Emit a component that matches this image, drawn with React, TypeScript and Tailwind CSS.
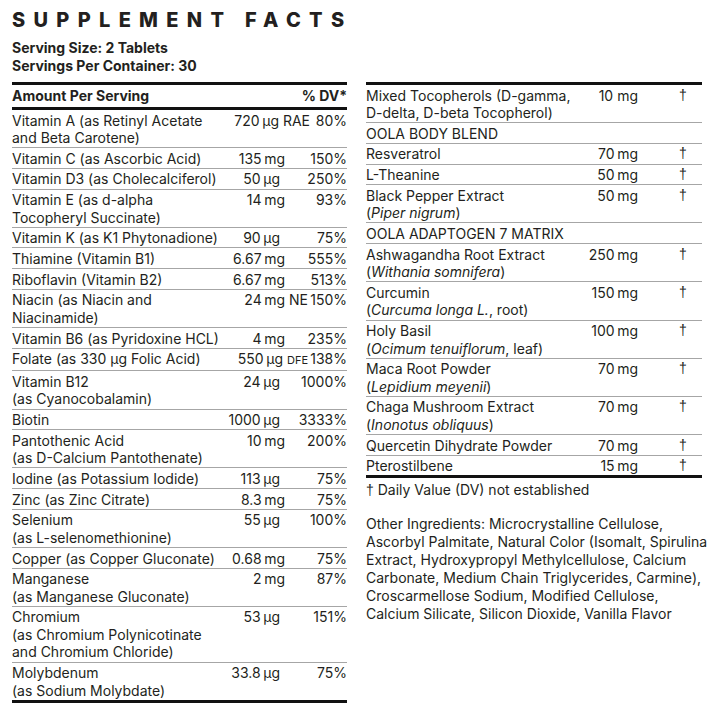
import React from "react";

type LRowT = {
  n: React.ReactNode[];
  a: React.ReactNode;
  d: string;
  ac?: string;
  dc?: string;
};

const T = "\u2009";

const left: LRowT[] = [
  { n: ["Vitamin A (as Retinyl Acetate", "and Beta Carotene)"], a: <>720{T}µg RAE</>, d: "80%", dc: "w-[37px] text-right" },
  { n: ["Vitamin C (as Ascorbic Acid)"], a: <>135{T}mg</>, d: "150%" },
  { n: ["Vitamin D3 (as Cholecalciferol)"], a: <>50{T}µg</>, d: "250%", ac: "mr-[5px]" },
  { n: ["Vitamin E (as d-alpha", "Tocopheryl Succinate)"], a: <>14{T}mg</>, d: "93%" },
  { n: ["Vitamin K (as K1 Phytonadione)"], a: <>90{T}µg</>, d: "75%", ac: "mr-[5px]" },
  { n: ["Thiamine (Vitamin B1)"], a: <>6.67{T}mg</>, d: "555%" },
  { n: ["Riboflavin (Vitamin B2)"], a: <>6.67{T}mg</>, d: "513%" },
  { n: ["Niacin (as Niacin and", "Niacinamide)"], a: <>24{T}mg NE</>, d: "150%", dc: "w-[39px] text-right" },
  { n: ["Vitamin B6 (as Pyridoxine HCL)"], a: <>4{T}mg</>, d: "235%" },
  { n: ["Folate (as 330 µg Folic Acid)"], a: <>550{T}µg <span className="text-[11px]">DFE</span></>, d: "138%", dc: "w-[39px] text-right" },
  { n: ["Vitamin B12", "(as Cyanocobalamin)"], a: <>24{T}µg</>, d: "1000%", ac: "mr-[5px]" },
  { n: ["Biotin"], a: <>1000{T}µg</>, d: "3333%", ac: "mr-[5px]" },
  { n: ["Pantothenic Acid", "(as D-Calcium Pantothenate)"], a: <>10{T}mg</>, d: "200%" },
  { n: ["Iodine (as Potassium Iodide)"], a: <>113{T}µg</>, d: "75%", ac: "mr-[5px]" },
  { n: ["Zinc (as Zinc Citrate)"], a: <>8.3{T}mg</>, d: "75%" },
  { n: ["Selenium", "(as L-selenomethionine)"], a: <>55{T}µg</>, d: "100%", ac: "mr-[5px]" },
  { n: ["Copper (as Copper Gluconate)"], a: <>0.68{T}mg</>, d: "75%" },
  { n: ["Manganese", "(as Manganese Gluconate)"], a: <>2{T}mg</>, d: "87%" },
  { n: ["Chromium", "(as Chromium Polynicotinate", "and Chromium Chloride)"], a: <>53{T}µg</>, d: "151%", ac: "mr-[5px]" },
  { n: ["Molybdenum", "(as Sodium Molybdate)"], a: <>33.8{T}µg</>, d: "75%", ac: "mr-[5px]" },
];

type RRowT = { n: React.ReactNode[]; a?: React.ReactNode };

const right: RRowT[] = [
  { n: ["Mixed Tocopherols (D-gamma,", "D-delta, D-beta Tocopherol)"], a: "10 mg" },
  { n: ["OOLA BODY BLEND"] },
  { n: ["Resveratrol"], a: <>70{T}mg</> },
  { n: ["L-Theanine"], a: <>50{T}mg</> },
  { n: ["Black Pepper Extract", <>(<i>Piper nigrum</i>)</>], a: <>50{T}mg</> },
  { n: ["OOLA ADAPTOGEN 7 MATRIX"] },
  { n: ["Ashwagandha Root Extract", <>(<i>Withania somnifera</i>)</>], a: <>250{T}mg</> },
  { n: ["Curcumin", <>(<i>Curcuma longa L.</i>, root)</>], a: <>150{T}mg</> },
  { n: ["Holy Basil", <>(<i>Ocimum tenuiflorum</i>, leaf)</>], a: <>100{T}mg</> },
  { n: ["Maca Root Powder", <>(<i>Lepidium meyenii</i>)</>], a: <>70{T}mg</> },
  { n: ["Chaga Mushroom Extract", <>(<i>Inonotus obliquus</i>)</>], a: <>70{T}mg</> },
  { n: ["Quercetin Dihydrate Powder"], a: <>70{T}mg</> },
  { n: ["Pterostilbene"], a: <>15{T}mg</> },
];

const dag = "font-['Liberation_Sans',sans-serif]";

export default function App() {
  return (
    <div
      className="w-[727px] h-[720px] bg-white text-[#231f20] flex pl-[12px] gap-[19px] overflow-hidden"
      style={{ fontFamily: "Inter, 'Noto Sans', sans-serif" }}
    >
      <div className="w-[335px] flex flex-col">
        <div className="mt-[8px] text-[20px] leading-[24px] font-extrabold tracking-[0.415em] whitespace-nowrap">
          SUPPLEMENT FACTS
        </div>
        <div className="mt-[7px] text-[14px] leading-[18px] font-bold">
          <div>Serving Size: 2 Tablets</div>
          <div>Servings Per Container: 30</div>
        </div>
        <div className="mt-[7px] h-[3px] bg-[#111]" />
        <div className="flex justify-between text-[14px] leading-[18px] font-bold py-[2px]">
          <span>Amount Per Serving</span>
          <span>% DV*</span>
        </div>
        <div className="h-[3px] bg-[#111]" />
        <div className="text-[14px] leading-[17.5px]">
          {left.map((r, i) => (
            <div key={i} className="flex border-b border-[#a6a6a6] last:border-b-0 pt-[1.5px] pb-[0.7px]">
              <div className="flex-1 min-w-0 whitespace-nowrap">
                {r.n.map((l, j) => (
                  <div key={j}>{l}</div>
                ))}
              </div>
              <div className={"whitespace-nowrap text-right " + (r.ac ?? "")}>{r.a}</div>
              <div className={"whitespace-nowrap " + (r.dc ?? "w-[62px] text-right")}>{r.d}</div>
            </div>
          ))}
        </div>
        <div className="h-[3px] bg-[#111]" />
      </div>
      <div className="w-[336px] flex flex-col pt-[82px]">
        <div className="h-[3px] bg-[#111]" />
        <div className="text-[14px] leading-[17.5px]">
          {right.map((r, i) => (
            <div key={i} className="flex border-b border-[#a6a6a6] last:border-b-0 pt-[1.5px] pb-[0.7px]">
              <div className="flex-1 min-w-0 whitespace-nowrap">
                {r.n.map((l, j) => (
                  <div key={j}>{l}</div>
                ))}
              </div>
              <div className="whitespace-nowrap text-right">{r.a}</div>
              <div className={"w-[64px] pl-[41px] text-[14px] " + dag}>{r.a ? "†" : ""}</div>
            </div>
          ))}
        </div>
        <div className="h-[3px] bg-[#111]" />
        <div className="mt-[3px] text-[14px] leading-[18px]">
          <span className={dag}>†</span> Daily Value (DV) not established
        </div>
        <div className="mt-[16px] text-[14px] leading-[18px] whitespace-nowrap">
          <div>Other Ingredients: Microcrystalline Cellulose,</div>
          <div>Ascorbyl Palmitate, Natural Color (Isomalt, Spirulina</div>
          <div>Extract, Hydroxypropyl Methylcellulose, Calcium</div>
          <div>Carbonate, Medium Chain Triglycerides, Carmine),</div>
          <div>Croscarmellose Sodium, Modified Cellulose,</div>
          <div>Calcium Silicate, Silicon Dioxide, Vanilla Flavor</div>
        </div>
      </div>
    </div>
  );
}
